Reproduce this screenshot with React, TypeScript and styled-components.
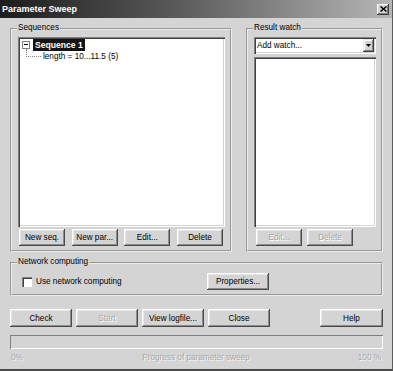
import React from 'react'
import styled, { createGlobalStyle } from 'styled-components'

const GlobalStyle = createGlobalStyle`
  html, body {
    margin: 0;
    padding: 0;
    background: #d4d4d4;
  }
  body {
    font-family: "Liberation Sans", Arial, sans-serif;
    font-size: 8.2px;
    color: #000;
  }
`

// window frame
const Window = styled.div`
  width: 393px;
  height: 371px;
  box-sizing: border-box;
  background: #d4d4d4;
  border-right: 1px solid #5c5c5c;
  border-bottom: 2px solid #4a4a4a;
  display: flex;
  flex-direction: column;
`

const TitleBar = styled.div`
  height: 18px;
  flex: none;
  display: flex;
  align-items: center;
  justify-content: space-between;
  padding: 0 3px 0 2px;
  background: linear-gradient(90deg, #1c1c1c 0%, #5a5a5a 45%, #b6b6b6 100%);
  color: #fff;
  font-weight: bold;
  font-size: 9px;
`

const CloseBox = styled.div`
  width: 12px;
  height: 11px;
  background: #d4d4d4;
  box-shadow: inset -1px -1px 0 #404040, inset 1px 1px 0 #fff, inset -2px -2px 0 #808080;
  display: flex;
  align-items: center;
  justify-content: center;
`

const Body = styled.div`
  flex: 1;
  display: flex;
  flex-direction: column;
  padding: 10px 9px 0 10px;
`

const TopRow = styled.div`
  display: flex;
  gap: 14px;
  height: 224px;
`

// group box: etched frame, caption sits on the top line
const Group = styled.div<{ $width?: number; $top?: number }>`
  margin-top: ${p => p.$top || 0}px;
  width: ${p => (p.$width ? `${p.$width}px` : 'auto')};
  box-sizing: border-box;
  border: 2px groove #ececec;
  display: flex;
  flex-direction: column;
`

const GroupLabel = styled.span`
  align-self: flex-start;
  margin: -7px 0 0 5px;
  padding: 0 1px;
  line-height: 10px;
  background: #d4d4d4;
`

const GroupBody = styled.div`
  flex: 1;
  display: flex;
  flex-direction: column;
  padding: 4px 5px 4px 6px;
`

const NetBody = styled.div`
  display: grid;
  grid-template-columns: 185px auto;
  align-items: center;
  padding: 6px 0 4px 10px;
`

const Sunken = styled.div<{ $bg?: string }>`
  background: ${p => p.$bg || '#fff'};
  box-shadow: inset 1px 1px 0 #808080, inset 2px 2px 0 #404040, inset -1px -1px 0 #fff,
    inset -2px -2px 0 #d4d4d4;
`

const TreeView = styled(Sunken)`
  flex: 1;
  padding: 2px 2px 2px 4px;
`

const TreeRow = styled.div<{ $indent?: number }>`
  display: flex;
  align-items: center;
  height: ${p => (p.$indent ? 10 : 12)}px;
  padding-left: ${p => p.$indent || 0}px;
`

const Expander = styled.span`
  position: relative;
  width: 8px;
  height: 8px;
  box-sizing: border-box;
  border: 1px solid #808080;
  background: #fff;
  flex: none;
  &::after {
    content: '';
    position: absolute;
    left: 1px;
    top: 2px;
    width: 4px;
    height: 1px;
    background: #000;
  }
`

const Selected = styled.span`
  margin-left: 3px;
  padding: 0 2px;
  line-height: 12px;
  background: #141414;
  color: #fff;
  font-weight: bold;
  font-size: 8.6px;
`

const Connector = styled.span`
  align-self: flex-start;
  margin-top: -2px;
  width: 14px;
  height: 7px;
  flex: none;
  border-left: 1px dotted #808080;
  border-bottom: 1px dotted #808080;
`

const Leaf = styled.span`
  margin-left: 2px;
  white-space: nowrap;
`

const ButtonGrid = styled.div<{ $cols: number }>`
  margin-top: 2px;
  display: grid;
  grid-template-columns: repeat(${p => p.$cols}, 46px);
  justify-content: space-between;
  padding: 0 2px 0 1px;
`

const ButtonRow = styled.div<{ $gap: number; $top: number; $inset?: number }>`
  display: flex;
  gap: ${p => p.$gap}px;
  margin-top: ${p => p.$top}px;
  padding-left: ${p => p.$inset || 0}px;
`

const Button = styled.button<{ $width?: number; $height?: number }>`
  width: ${p => p.$width || 46}px;
  height: ${p => p.$height || 17}px;
  padding: 0;
  margin: 0;
  font: inherit;
  color: #000;
  background: #d4d4d4;
  border: none;
  box-shadow: inset -1px -1px 0 #4a4a4a, inset 1px 1px 0 #fff, inset -2px -2px 0 #8c8c8c,
    inset 2px 2px 0 #e6e6e6;
  &:disabled {
    color: #a8a8a8;
    text-shadow: 1px 1px 0 #fff;
  }
`

const PushRight = styled(Button)`
  margin-left: auto;
`

const Combo = styled(Sunken)`
  height: 17px;
  display: flex;
  align-items: center;
  padding: 2px;
  box-sizing: border-box;
`

const ComboText = styled.span`
  flex: 1;
  padding-left: 1px;
`

const DropButton = styled.span`
  width: 11px;
  height: 13px;
  background: #d4d4d4;
  box-shadow: inset -1px -1px 0 #404040, inset 1px 1px 0 #e6e6e6, inset -2px -2px 0 #808080,
    inset 2px 2px 0 #fff;
  display: flex;
  align-items: center;
  justify-content: center;
`

const ListBox = styled(Sunken)`
  flex: 1;
  margin-top: 3px;
`

const CheckLabel = styled.label`
  display: flex;
  align-items: center;
  gap: 4px;
`

const CheckBox = styled.span`
  width: 10px;
  height: 10px;
  box-sizing: border-box;
  background: #fff;
  box-shadow: inset 1px 1px 0 #808080, inset 2px 2px 0 #404040, inset -1px -1px 0 #fff;
`

const Progress = styled(Sunken)`
  margin-top: 8px;
  height: 14px;
  box-shadow: inset 1px 1px 0 #808080, inset -1px -1px 0 #fff;
`

const Captions = styled.div`
  margin-top: 4px;
  display: grid;
  grid-template-columns: 1fr auto 1fr;
  line-height: 10px;
  padding: 0 2px 0 1px;
  color: #a8a8a8;
  text-shadow: 1px 1px 0 #f4f4f4;
`

const Caption = styled.span<{ $align: string }>`
  text-align: ${p => p.$align};
`

const App: React.FC = () => (
  <>
    <GlobalStyle />
    <Window>
      <TitleBar>
        <span>Parameter Sweep</span>
        <CloseBox>
          <svg width="7" height="6" viewBox="0 0 7 6">
            <path d="M0.5 0.5 L6.5 5.5 M6.5 0.5 L0.5 5.5" stroke="#000" strokeWidth="1.5" />
          </svg>
        </CloseBox>
      </TitleBar>
      <Body>
        <TopRow>
          <Group $width={222}>
            <GroupLabel>Sequences</GroupLabel>
            <GroupBody>
              <TreeView>
                <TreeRow>
                  <Expander />
                  <Selected>Sequence 1</Selected>
                </TreeRow>
                <TreeRow $indent={4}>
                  <Connector />
                  <Leaf>length = 10...11.5 (5)</Leaf>
                </TreeRow>
              </TreeView>
              <ButtonGrid $cols={4}>
                <Button>New seq.</Button>
                <Button>New par...</Button>
                <Button>Edit...</Button>
                <Button>Delete</Button>
              </ButtonGrid>
            </GroupBody>
          </Group>
          <Group $width={137}>
            <GroupLabel>Result watch</GroupLabel>
            <GroupBody>
              <Combo>
                <ComboText>Add watch...</ComboText>
                <DropButton>
                  <svg width="5" height="3" viewBox="0 0 5 3">
                    <path d="M0 0 H5 L2.5 3 Z" fill="#000" />
                  </svg>
                </DropButton>
              </Combo>
              <ListBox />
              <ButtonRow $gap={5} $top={2} $inset={2}>
                <Button disabled>Edit...</Button>
                <Button disabled>Delete</Button>
              </ButtonRow>
            </GroupBody>
          </Group>
        </TopRow>
        <Group $top={10}>
          <GroupLabel>Network computing</GroupLabel>
          <NetBody>
            <CheckLabel>
              <CheckBox />
              Use network computing
            </CheckLabel>
            <Button $width={62}>Properties...</Button>
          </NetBody>
        </Group>
        <ButtonRow $gap={4} $top={13}>
          <Button $width={62} $height={18}>Check</Button>
          <Button $width={62} $height={18} disabled>Start</Button>
          <Button $width={62} $height={18}>View logfile...</Button>
          <Button $width={62} $height={18}>Close</Button>
          <PushRight $width={63} $height={18}>Help</PushRight>
        </ButtonRow>
        <Progress $bg="#d4d4d4" />
        <Captions>
          <Caption $align="left">0%</Caption>
          <Caption $align="center">Progress of parameter sweep</Caption>
          <Caption $align="right">100 %</Caption>
        </Captions>
      </Body>
    </Window>
  </>
)

export default App
